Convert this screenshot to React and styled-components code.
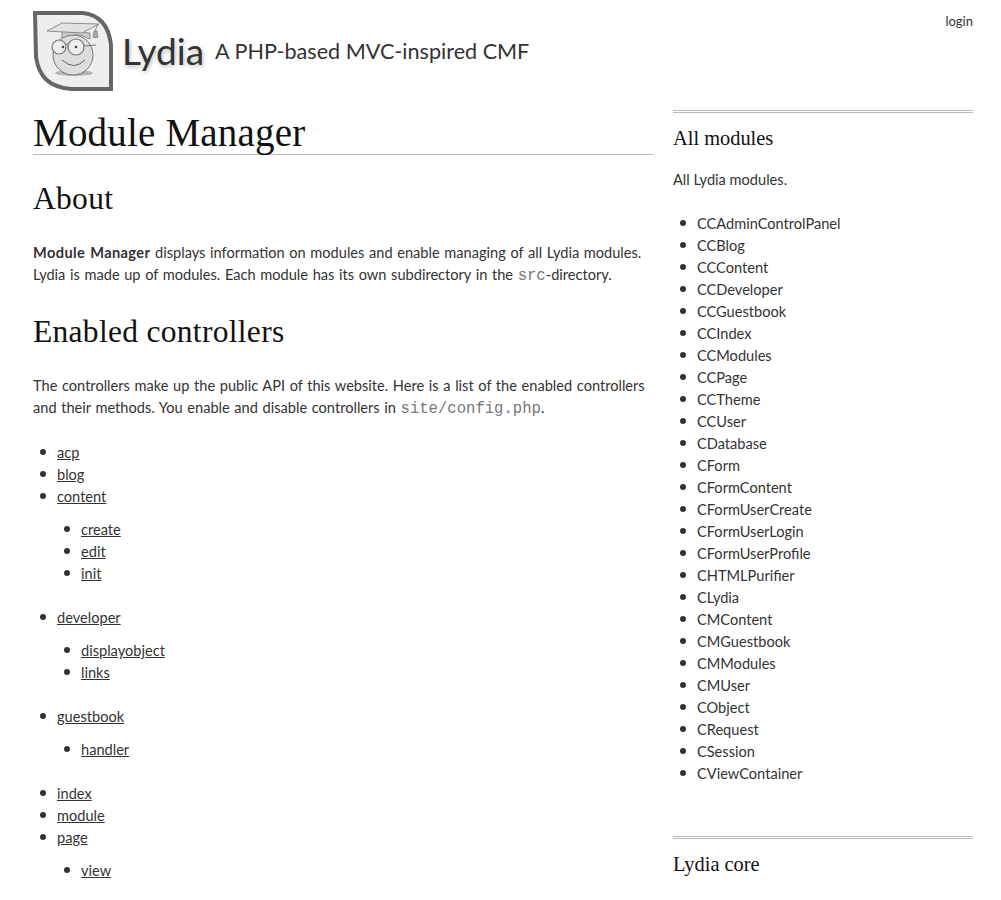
import styled, { createGlobalStyle } from "styled-components";

const GlobalStyle = createGlobalStyle`
  html, body {
    margin: 0;
    padding: 0;
    height: 900px;
    overflow: hidden;
    background: #fff;
  }
  body {
    font-family: "Lato", "Liberation Sans", sans-serif;
    font-size: 14.6px;
    line-height: 22px;
    color: #333;
  }
`;

const Page = styled.div`
  padding: 0 28px 0 33px;
`;

const Header = styled.header`
  display: flex;
  align-items: flex-start;
  height: 110px;
`;

const Logo = styled.svg`
  display: block;
  width: 81px;
  height: 81px;
  margin-top: 11px;
  flex: none;
`;

const SiteTitle = styled.div`
  margin: 29px 0 0 8px;
  font-size: 37px;
  line-height: 44px;
  color: #333;
  text-shadow: 1px 2px 4px #bbb;
`;

const Slogan = styled.div`
  margin: 36px 0 0 11px;
  font-size: 21.6px;
  line-height: 30px;
  color: #333;
`;

const LoginMenu = styled.a`
  margin: 10px 0 0 auto;
  font-size: 13px;
  line-height: 22px;
  color: #333;
`;

const Columns = styled.div`
  display: grid;
  grid-template-columns: 620px 300px;
  column-gap: 20px;
`;

const PageTitle = styled.h1`
  margin: 0 0 21px;
  padding-bottom: 2px;
  height: 42px;
  font-family: "Liberation Serif", serif;
  font-weight: 400;
  font-size: 39px;
  letter-spacing: 0.2px;
  line-height: 46px;
  color: #111;
  border-bottom: 1px solid #bbb;
`;

const Heading = styled.h2`
  margin: 0 0 20px;
  font-family: "Liberation Serif", serif;
  font-weight: 400;
  font-size: 31.5px;
  letter-spacing: 0.3px;
  line-height: 46px;
  color: #111;
`;

const Text = styled.p`
  margin: 0 0 22px;
`;

const BodyText = styled(Text)`
  word-spacing: 0.9px;

  strong {
    letter-spacing: 0.4px;
  }
`;

const Code = styled.code`
  font-family: "Liberation Mono", monospace;
  font-size: 15.6px;
  word-spacing: 0;
  color: #777;
`;

const List = styled.ul`
  margin: 0 0 22px;
  padding: 0 0 0 24px;
  list-style: none;
`;

const SubList = styled(List)`
  margin: 11px 0 22px;
`;

const Item = styled.li`
  position: relative;

  &::before {
    content: "";
    position: absolute;
    left: -17px;
    top: 7px;
    width: 6px;
    height: 6px;
    border-radius: 50%;
    background: #333;
  }
`;

const Link = styled.a`
  color: #333;
  text-decoration: underline;
`;

const Block = styled.section`
  border-top: 3px double #bbb;
  padding-top: 14px;
  margin-bottom: 51px;
`;

const BlockTitle = styled.h3`
  margin: 0 0 20px;
  font-family: "Liberation Serif", serif;
  font-weight: 400;
  font-size: 20.4px;
  line-height: 22px;
  color: #111;
`;

const controllers = [
  { name: "acp" },
  { name: "blog" },
  { name: "content", methods: ["create", "edit", "init"] },
  { name: "developer", methods: ["displayobject", "links"] },
  { name: "guestbook", methods: ["handler"] },
  { name: "index" },
  { name: "module" },
  { name: "page", methods: ["view"] },
];

const modules = [
  "CCAdminControlPanel", "CCBlog", "CCContent", "CCDeveloper", "CCGuestbook",
  "CCIndex", "CCModules", "CCPage", "CCTheme", "CCUser", "CDatabase", "CForm",
  "CFormContent", "CFormUserCreate", "CFormUserLogin", "CFormUserProfile",
  "CHTMLPurifier", "CLydia", "CMContent", "CMGuestbook", "CMModules", "CMUser",
  "CObject", "CRequest", "CSession", "CViewContainer",
];

function LydiaLogo() {
  return (
    <Logo viewBox="0 0 81 81">
      <path d="M2 2 L50 2 C68 4 76 16 78 34 L78 78 L38 78 C16 76 6 66 3 46 Z" fill="#eee" stroke="#666" strokeWidth="4" />
      <ellipse cx="41" cy="62" rx="19" ry="3" fill="#b4b4b4" />
      <circle cx="40" cy="44" r="20" fill="#ddd" stroke="#777" strokeWidth="1" />
      <path d="M29 20 L29 27 Q43 20 57 28 L57 22 Z" fill="#ccc" stroke="#777" strokeWidth="0.8" />
      <path d="M14 20 L29 12 L66 13 L49 22 Z" fill="#e2e2e2" stroke="#777" strokeWidth="0.8" />
      <path d="M65 13 L62 20" fill="none" stroke="#777" strokeWidth="0.8" />
      <path d="M61 20 L64 20 L65 26 Q62 28 60 26 Z" fill="#aaa" stroke="#777" strokeWidth="0.7" />
      <circle cx="26" cy="36" r="7" fill="#eee" stroke="#777" strokeWidth="1.2" />
      <circle cx="43" cy="36" r="8" fill="#eee" stroke="#777" strokeWidth="1.2" />
      <path d="M33 34 Q34 32 35 33 M51 35 L63 34" fill="none" stroke="#777" strokeWidth="1" />
      <circle cx="30" cy="36" r="1.3" fill="#444" />
      <circle cx="43" cy="36" r="1.3" fill="#444" />
      <path d="M29 49 Q41 60 52 49" fill="none" stroke="#666" strokeWidth="1" />
    </Logo>
  );
}

function App() {
  return (
    <Page>
      <GlobalStyle />
      <Header>
        <LydiaLogo />
        <SiteTitle>Lydia</SiteTitle>
        <Slogan>A PHP-based MVC-inspired CMF</Slogan>
        <LoginMenu>login</LoginMenu>
      </Header>
      <Columns>
        <main>
          <PageTitle>Module Manager</PageTitle>
          <Heading>About</Heading>
          <BodyText>
            <strong>Module Manager</strong> displays information on modules and enable managing of all Lydia modules.
            Lydia is made up of modules. Each module has its own subdirectory in the <Code>src</Code>-directory.
          </BodyText>
          <Heading>Enabled controllers</Heading>
          <BodyText>
            The controllers make up the public API of this website. Here is a list of the enabled controllers
            and their methods. You enable and disable controllers in <Code>site/config.php</Code>.
          </BodyText>
          <List>
            {controllers.map((c) => (
              <Item key={c.name}>
                <Link>{c.name}</Link>
                {c.methods && (
                  <SubList>
                    {c.methods.map((m) => (
                      <Item key={m}><Link>{m}</Link></Item>
                    ))}
                  </SubList>
                )}
              </Item>
            ))}
          </List>
        </main>
        <aside>
          <Block>
            <BlockTitle>All modules</BlockTitle>
            <Text>All Lydia modules.</Text>
            <List>
              {modules.map((m) => <Item key={m}>{m}</Item>)}
            </List>
          </Block>
          <Block>
            <BlockTitle>Lydia core</BlockTitle>
          </Block>
        </aside>
      </Columns>
    </Page>
  );
}

export default App;
